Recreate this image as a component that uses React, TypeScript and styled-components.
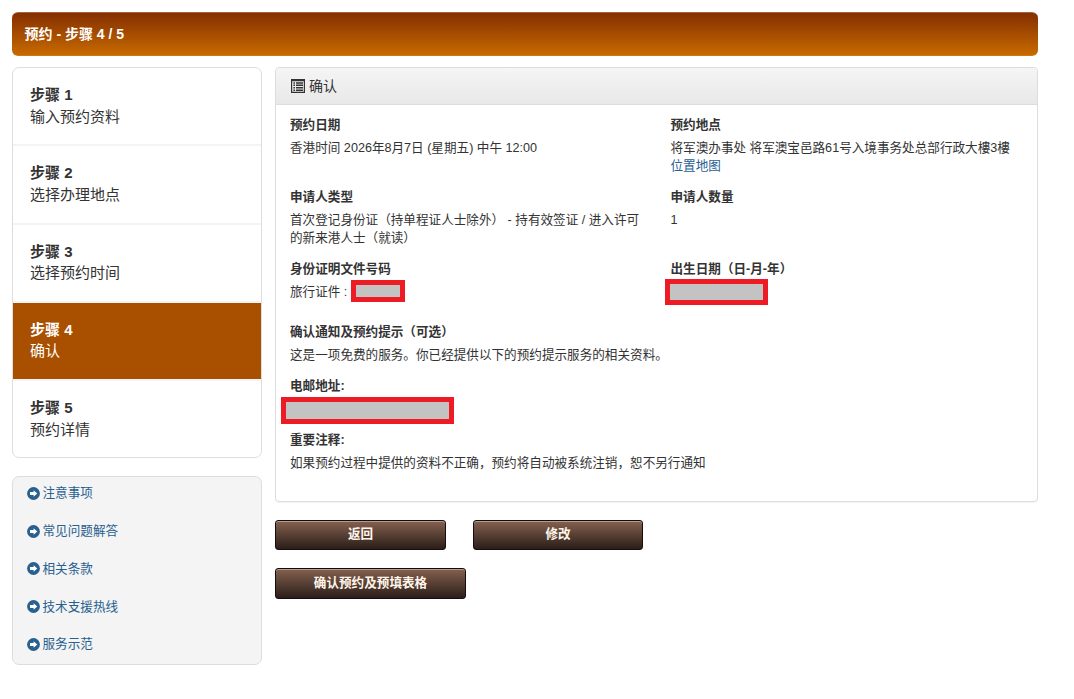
import React from "react";
import styled, { createGlobalStyle, css } from "styled-components";

const GlobalStyle = createGlobalStyle`
  *, *::before, *::after { box-sizing: border-box; }
  body {
    margin: 0;
    background: #fff;
    color: #333;
    font-family: "Liberation Sans", "Noto Sans CJK SC", sans-serif;
    font-size: 12.6px;
    line-height: 18px;
  }
`;

const Page = styled.div`
  width: 1026px;
  margin: 12px 0 0 12px;
`;

const Banner = styled.header`
  height: 44px;
  padding: 0 12.5px 1px;
  display: flex;
  align-items: center;
  border-radius: 6px;
  background: linear-gradient(#842f00, #c76a00);
  border-top: 1px solid #a3653f;
  border-bottom: 1px solid #cc7a10;
  color: #fff;
  font-size: 14px;
  font-weight: bold;
`;

const Columns = styled.div`
  display: flex;
  gap: 13px;
  margin-top: 11px;
`;

const Sidebar = styled.aside`
  width: 250px;
  flex: none;
`;

const StepList = styled.ol`
  list-style: none;
  margin: 0;
  padding: 0;
  height: 391px;
  border: 1px solid #ddd;
  border-radius: 7px;
  overflow: hidden;
`;

const Step = styled.li<{ $active?: boolean }>`
  height: 78.25px;
  padding: 16px 17px 0;
  border-bottom: 2px solid #f4f4f4;
  font-size: 15px;
  line-height: 21.5px;
  &:last-child { border-bottom: 0; }
  ${(p) =>
    p.$active &&
    css`
      background: #a94f00;
      background-clip: padding-box;
      color: #fff;
    `}
`;

const StepTitle = styled.div`
  font-weight: bold;
`;

const LinkBox = styled.nav`
  display: flex;
  flex-direction: column;
  gap: 19.75px;
  height: 189px;
  margin-top: 18px;
  padding: 7.4px 13.5px;
  border: 1px solid #ddd;
  border-radius: 7px;
  background: #f4f4f4;
`;

const SideLink = styled.a`
  display: flex;
  align-items: center;
  gap: 3px;
  height: 18px;
  color: #286090;
  svg { flex: none; }
`;

const Main = styled.main`
  width: 763px;
`;

const Panel = styled.section`
  height: 435px;
  border: 1px solid #ddd;
  border-radius: 4px;
  box-shadow: 0 1px 1px rgba(0, 0, 0, 0.05);
`;

const PanelHeading = styled.h2`
  display: flex;
  align-items: center;
  gap: 4px;
  height: 37px;
  margin: 0;
  padding: 0 14px 1px 15px;
  border-bottom: 1px solid #ddd;
  border-radius: 3px 3px 0 0;
  background: linear-gradient(#f5f5f5, #e8e8e8);
  font-size: 14px;
  font-weight: normal;
`;

const PanelBody = styled.div`
  padding: 11px 14px 0;
`;

const FieldRow = styled.div<{ $height: number }>`
  display: grid;
  grid-template-columns: 380.5px 1fr;
  height: ${(p) => p.$height}px;
`;

const Label = styled.div`
  height: 18px;
  margin-bottom: 5px;
  font-weight: bold;
`;

const Value = styled.div<{ $width?: number }>`
  width: ${(p) => (p.$width ? `${p.$width}px` : "auto")};
  white-space: ${(p) => (p.$width ? "normal" : "nowrap")};
`;

const MapLink = styled.a`
  display: block;
  color: #286090;
`;

const InlineValue = styled.div`
  display: flex;
`;

const Redacted = styled.div<{ $w: number; $h: number; $m: string }>`
  width: ${(p) => p.$w}px;
  height: ${(p) => p.$h}px;
  margin: ${(p) => p.$m};
  border: 5px solid #ed1c24;
  background: #c3c3c3;
`;

const ButtonRow = styled.div`
  display: flex;
  gap: 27px;
  margin-top: 18px;
`;

const Button = styled.button<{ $w: number; $h: number }>`
  width: ${(p) => p.$w}px;
  height: ${(p) => p.$h}px;
  padding: 0 0 2px;
  border: 1px solid #1a0d09;
  border-radius: 3px;
  background: linear-gradient(#85614f, #2a1e19);
  box-shadow: inset 0 1px 0 #b09c93;
  color: #fff5ea;
  font: bold 12.6px/18px "Liberation Sans", "Noto Sans CJK SC", sans-serif;
`;

const steps = ["输入预约资料", "选择办理地点", "选择预约时间", "确认", "预约详情"];
const links = ["注意事项", "常见问题解答", "相关条款", "技术支援热线", "服务示范"];

const ArrowIcon = () => (
  <svg width="13" height="13" viewBox="0 0 13 13">
    <circle cx="6.5" cy="6.5" r="6.4" fill="#286090" />
    <path d="M3 4.9h3.6V3.2L10.3 6.5 6.6 9.8V8.1H3z" fill="#fff" />
  </svg>
);

const ListIcon = () => (
  <svg width="14" height="14" viewBox="0 0 14 14">
    <path
      fill="#333"
      fillRule="evenodd"
      d="M0 0h14v14H0zM1.2 2.2v10.6h11.6V2.2z"
    />
    <path
      fill="#333"
      d="M5 3.2h7v1.5H5zM5 5.6h7v1.5H5zM5 8h7v1.5H5zM5 10.4h7v1.5H5zM2.4 3.2H4v1.5H2.4zM2.4 5.6H4v1.5H2.4zM2.4 8H4v1.5H2.4zM2.4 10.4H4v1.5H2.4z"
    />
  </svg>
);

export default function App() {
  return (
    <Page>
      <GlobalStyle />
      <Banner>预约 - 步骤 4 / 5</Banner>
      <Columns>
        <Sidebar>
          <StepList>
            {steps.map((text, i) => (
              <Step key={text} $active={i === 3}>
                <StepTitle>步骤 {i + 1}</StepTitle>
                {text}
              </Step>
            ))}
          </StepList>
          <LinkBox>
            {links.map((text) => (
              <SideLink key={text}>
                <ArrowIcon />
                {text}
              </SideLink>
            ))}
          </LinkBox>
        </Sidebar>
        <Main>
          <Panel>
            <PanelHeading>
              <ListIcon />
              确认
            </PanelHeading>
            <PanelBody>
              <FieldRow $height={72}>
                <div>
                  <Label>预约日期</Label>
                  <Value>香港时间 2026年8月7日 (星期五) 中午 12:00</Value>
                </div>
                <div>
                  <Label>预约地点</Label>
                  <Value>将军澳办事处 将军澳宝邑路61号入境事务处总部行政大樓3樓</Value>
                  <MapLink>位置地图</MapLink>
                </div>
              </FieldRow>
              <FieldRow $height={72}>
                <div>
                  <Label>申请人类型</Label>
                  <Value $width={351}>
                    首次登记身份证（持单程证人士除外） - 持有效签证 / 进入许可的新来港人士（就读）
                  </Value>
                </div>
                <div>
                  <Label>申请人数量</Label>
                  <Value>1</Value>
                </div>
              </FieldRow>
              <FieldRow $height={63}>
                <div>
                  <Label>身份证明文件号码</Label>
                  <InlineValue>
                    <Value $width={61}>旅行证件 :</Value>
                    <Redacted $w={54} $h={22} $m="-3px 0 0" />
                  </InlineValue>
                </div>
                <div>
                  <Label>出生日期（日-月-年）</Label>
                  <Redacted $w={103} $h={26} $m="-4px 0 0 -5.5px" />
                </div>
              </FieldRow>
              <FieldRow $height={54}>
                <div>
                  <Label>确认通知及预约提示（可选）</Label>
                  <Value>这是一项免费的服务。你已经提供以下的预约提示服务的相关资料。</Value>
                </div>
              </FieldRow>
              <FieldRow $height={54}>
                <div>
                  <Label>电邮地址:</Label>
                  <Redacted $w={173} $h={27} $m="-3px 0 0 -9px" />
                </div>
              </FieldRow>
              <Label>重要注释:</Label>
              <Value>如果预约过程中提供的资料不正确，预约将自动被系统注销，恕不另行通知</Value>
            </PanelBody>
          </Panel>
          <ButtonRow>
            <Button $w={171} $h={30}>返回</Button>
            <Button $w={170} $h={30}>修改</Button>
          </ButtonRow>
          <ButtonRow>
            <Button $w={191} $h={31}>确认预约及预填表格</Button>
          </ButtonRow>
        </Main>
      </Columns>
    </Page>
  );
}
